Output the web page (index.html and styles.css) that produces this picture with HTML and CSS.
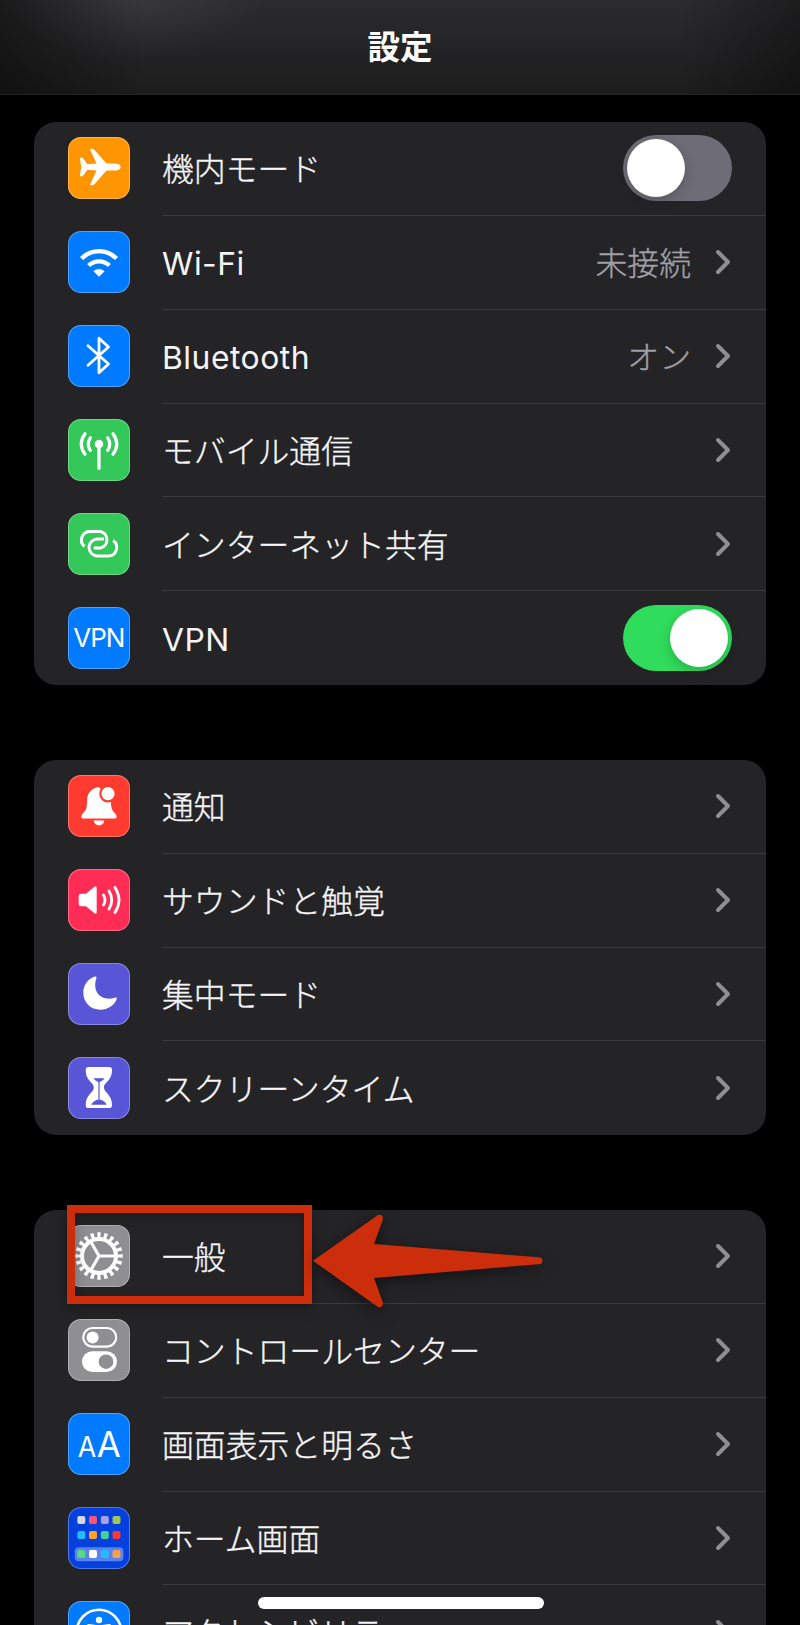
FILE: index.html
```html
<!DOCTYPE html>
<html lang="ja">
<head>
  <meta charset="UTF-8" />
  <meta name="viewport" content="width=device-width, initial-scale=1.0"/>
  <title>設定</title>
  <link rel="stylesheet" href="styles.css">
</head>
<body>
  <header class="navbar"><h1>設定</h1></header>

  <main class="settings">
    <!-- 通信 -->
    <ul class="group">
      <li>
        <svg class="icon orange" viewBox="0 0 62 62"><path fill="#fff" d="M52.700 30C52.700 27.600 49.500 26.500 46.500 26.500H38.500L26.300 12.800C25.300 11.800 23.500 11.500 22 12.200L28.500 26.500L19.500 27.300L15.200 21.500C14.200 20.200 12.500 20.300 11.800 21.200L13.300 30L11.800 38.800C12.500 39.700 14.200 39.800 15.200 38.500L19.500 32.700L28.500 33.500L22 47.800C23.500 48.500 25.300 48.200 26.300 47.200L38.500 33.500H46.500C49.500 33.500 52.700 32.400 52.700 30Z"/></svg>
        <div class="row"><span class="label">機内モード</span><span class="switch"></span></div>
      </li>
      <li>
        <svg class="icon blue" viewBox="0 0 62 62"><g fill="none" stroke="#fff" stroke-width="4.300"><path d="M13.500 27.500A24.500 24.500 0 0 1 48.500 27.500"/><path d="M20.600 34.600A14.700 14.700 0 0 1 41.400 34.600"/></g><path fill="#fff" d="M31 45.800L25.400 40.200Q31 35.600 36.600 40.200Z"/></svg>
        <div class="row"><span class="label latin">Wi-Fi</span><span class="value">未接続</span><svg class="chevron" viewBox="0 0 16 26"><path d="M3 3L13 13L3 23"/></svg></div>
      </li>
      <li>
        <svg class="icon blue" viewBox="0 0 62 62"><path fill="none" stroke="#fff" stroke-width="2.800" stroke-linecap="round" stroke-linejoin="round" d="M20 20.800L40.500 39L31 47.800V13.200L40.500 22L20 40.200"/></svg>
        <div class="row"><span class="label latin">Bluetooth</span><span class="value">オン</span><svg class="chevron" viewBox="0 0 16 26"><path d="M3 3L13 13L3 23"/></svg></div>
      </li>
      <li>
        <svg class="icon green" viewBox="0 0 62 62"><circle cx="31" cy="25" r="4.300" fill="#fff"/><path fill="none" stroke="#fff" stroke-width="3.200" stroke-linecap="round" d="M31 26V49.500M22.300 18.800Q18.200 25 22.300 31.300M39.700 18.800Q43.800 25 39.700 31.300M17 14.800Q9.500 25 17 35.300M45 14.800Q52.500 25 45 35.300"/></svg>
        <div class="row"><span class="label">モバイル通信</span><svg class="chevron" viewBox="0 0 16 26"><path d="M3 3L13 13L3 23"/></svg></div>
      </li>
      <li>
        <svg class="icon green" viewBox="0 0 62 62"><path fill="none" stroke="#fff" stroke-width="3" d="M16.500 33.500A8.500 8.500 0 0 1 21.500 18.500H32.500A8.500 8.500 0 0 1 32.500 35H25.700M36 26H29.500A8.500 8.500 0 0 0 29.500 43H40A8.500 8.500 0 0 0 45 27.500"/></svg>
        <div class="row"><span class="label">インターネット共有</span><svg class="chevron" viewBox="0 0 16 26"><path d="M3 3L13 13L3 23"/></svg></div>
      </li>
      <li>
        <svg class="icon blue" viewBox="0 0 62 62"><text class="vpn" x="31.300" y="39.500" textLength="52">VPN</text></svg>
        <div class="row"><span class="label latin">VPN</span><span class="switch on"></span></div>
      </li>
    </ul>

    <!-- 通知・集中 -->
    <ul class="group">
      <li>
        <svg class="icon red" viewBox="0 0 62 62"><path fill="#fff" d="M31 12C23.500 13 19 18 19 26C19 34 18 35.500 14 39.500C12.500 42 13.500 43.500 15.500 43.500H46.500C48.500 43.500 49.500 42 48 39.500C44 35.500 43 34 43 26L31 12ZM25.700 45.500H36.300C35.500 52 26.500 52 25.700 45.500Z"/><circle cx="40" cy="18.700" r="8.800" fill="#ff3b30"/><circle cx="40" cy="18.700" r="6.600" fill="#fff"/></svg>
        <div class="row"><span class="label">通知</span><svg class="chevron" viewBox="0 0 16 26"><path d="M3 3L13 13L3 23"/></svg></div>
      </li>
      <li>
        <svg class="icon pink" viewBox="0 0 62 62"><path fill="#fff" d="M13 24.700H18L26.500 17.800Q28.700 16.500 28.700 19V43Q28.700 45.500 26.500 44.200L18 37.300H13Q10.700 37.300 10.700 35V27Q10.700 24.700 13 24.700Z"/><path fill="none" stroke="#fff" stroke-width="2.800" stroke-linecap="round" d="M35.500 26Q38.500 31 35.500 36M41 22Q46.500 31 41 40M47 18.500Q55 31 47 43.500"/></svg>
        <div class="row"><span class="label">サウンドと触覚</span><svg class="chevron" viewBox="0 0 16 26"><path d="M3 3L13 13L3 23"/></svg></div>
      </li>
      <li>
        <svg class="icon purple" viewBox="0 0 62 62"><path fill="#fff" d="M27 13.500C19.500 16 15.300 22.500 15.300 29.500C15.300 39.500 22.500 46.700 32.500 46.700C39.500 46.700 46.500 42.500 48.600 36.300C49 34.700 48.200 34.200 46.800 34.700C35.500 38.500 23.500 31 28.300 15.500C28.700 14 28.300 13.200 27 13.500Z"/></svg>
        <div class="row"><span class="label">集中モード</span><svg class="chevron" viewBox="0 0 16 26"><path d="M3 3L13 13L3 23"/></svg></div>
      </li>
      <li>
        <svg class="icon purple" viewBox="0 0 62 62"><path fill="#fff" d="M20.500 10H41.200Q44 10 44 12.800C44 24.500 36 25 36 30.500S44 37 44 48.200Q44 51 41.200 51H20.500Q17.700 51 17.700 48.200C17.700 37 25.800 36 25.800 30.500S17.700 24.500 17.700 12.800Q17.700 10 20.500 10Z"/><path fill="#5856d6" d="M25.500 21.300H36.500Q35.500 23.500 32 24.700V42.500Q37.500 44.500 38.700 47.700H23.200Q24.500 44.500 30 42.500V24.700Q26.500 23.500 25.500 21.300Z"/><path stroke="#fff" stroke-width=".8" d="M31 25V43"/></svg>
        <div class="row"><span class="label">スクリーンタイム</span><svg class="chevron" viewBox="0 0 16 26"><path d="M3 3L13 13L3 23"/></svg></div>
      </li>
    </ul>

    <!-- 一般 -->
    <ul class="group">
      <li>
        <svg class="icon gray" viewBox="0 0 62 62"><g fill="none" stroke="#fff"><circle cx="31" cy="31" r="21" stroke-width="5.500" pathLength="80" stroke-dasharray="2 2" stroke-dashoffset="1"/><circle cx="31" cy="31" r="17" stroke-width="4"/><path stroke-width="3.200" d="M48 31H31L22.500 16.300M31 31L22.500 45.700"/></g></svg>
        <div class="row"><span class="label">一般</span><svg class="chevron" viewBox="0 0 16 26"><path d="M3 3L13 13L3 23"/></svg></div>
        <span class="marker"></span>
        <svg class="arrow" viewBox="0 0 232 96"><path d="M1 47.800L66 2Q71 1 71 6L62 31L229 44.500Q232 48 229 51L62 65L71 90Q71 95 66 94Z"/></svg>
      </li>
      <li>
        <svg class="icon gray" viewBox="0 0 62 62"><rect x="15.200" y="9" width="33" height="18.600" rx="9.300" fill="none" stroke="#fff" stroke-width="2.200"/><circle cx="24.600" cy="18.500" r="6" fill="#fff"/><rect x="14" y="32.300" width="35" height="20.800" rx="10.400" fill="#fff"/><circle cx="38" cy="42.700" r="7.300" fill="#8e8e93"/></svg>
        <div class="row"><span class="label">コントロールセンター</span><svg class="chevron" viewBox="0 0 16 26"><path d="M3 3L13 13L3 23"/></svg></div>
      </li>
      <li>
        <svg class="icon blue" viewBox="0 0 62 62"><text class="aa" x="9.800" y="44.300" font-size="28" textLength="18.500" lengthAdjust="spacingAndGlyphs">A</text><text class="aa" x="28.800" y="44.300" font-size="36" textLength="24" lengthAdjust="spacingAndGlyphs">A</text></svg>
        <div class="row"><span class="label">画面表示と明るさ</span><svg class="chevron" viewBox="0 0 16 26"><path d="M3 3L13 13L3 23"/></svg></div>
      </li>
      <li>
        <svg class="icon navy" viewBox="0 0 62 62">
          <rect x="6.800" y="40.300" width="48.600" height="14" rx="4" fill="#5b83ee"/>
          <rect x="9.300" y="9" width="8" height="8" rx="2" fill="#d8d8dc"/>
          <rect x="21" y="9" width="8" height="8" rx="2" fill="#fc5474"/>
          <rect x="32.800" y="9" width="8" height="8" rx="2" fill="#ab9fe6"/>
          <rect x="44.500" y="9" width="8" height="8" rx="2" fill="#a1c653"/>
          <rect x="9.300" y="24" width="8" height="8" rx="2" fill="#20bdff"/>
          <rect x="21" y="24" width="8" height="8" rx="2" fill="#ffa220"/>
          <rect x="32.800" y="24" width="8" height="8" rx="2" fill="#43d39a"/>
          <rect x="44.500" y="24" width="8" height="8" rx="2" fill="#fa3838"/>
          <rect x="9.300" y="43" width="8" height="8" rx="2" fill="#55d982"/>
          <rect x="21" y="43" width="8" height="8" rx="2" fill="#fff"/>
          <rect x="32.800" y="43" width="8" height="8" rx="2" fill="#20bdff"/>
          <rect x="44.500" y="43" width="8" height="8" rx="2" fill="#f9a04b"/>
        </svg>
        <div class="row"><span class="label">ホーム画面</span><svg class="chevron" viewBox="0 0 16 26"><path d="M3 3L13 13L3 23"/></svg></div>
      </li>
      <li>
        <svg class="icon blue" viewBox="0 0 62 62"><circle cx="31" cy="31" r="22.300" fill="none" stroke="#fff" stroke-width="2.600"/><circle cx="31" cy="19" r="3.200" fill="#fff"/><path fill="none" stroke="#fff" stroke-width="3" stroke-linecap="round" stroke-linejoin="round" d="M20.500 24.500L28 25.500H34L41.500 24.500M28.500 26V34L25 44M33.500 26V34L37 44"/></svg>
        <div class="row"><span class="label">アクセシビリティ</span><svg class="chevron" viewBox="0 0 16 26"><path d="M3 3L13 13L3 23"/></svg></div>
      </li>
    </ul>
  </main>

  <div class="home-indicator"></div>
</body>
</html>
```
FILE: styles.css
```css
* {
  box-sizing: border-box;
}
body {
  margin: 0;
  height: 1625px;
  overflow: hidden;
  position: relative;
  background-color: #000;
  color: #f5f5f7;
  font-family: Inter, "Noto Sans CJK JP", sans-serif;
}
.navbar {
  height: 95px;
  display: flex;
  align-items: center;
  justify-content: center;
  padding-bottom: 5px;
  border-bottom: 1px solid #222224;
  background:
    radial-gradient(ellipse 130px 60px at 135px 0, rgba(255,255,255,0.06), transparent),
    linear-gradient(90deg, rgba(0,0,0,0.4), transparent 18%, transparent 85%, rgba(0,0,0,0.35)),
    linear-gradient(#2c2c2e, #1c1c1d);
}
h1 {
  margin: 0;
  font-size: 32.500px;
  font-weight: 700;
  color: #fff;
}
.settings {
  display: flex;
  flex-direction: column;
  gap: 74.800px;
  padding: 27px 34px 0;
}
.group {
  list-style: none;
  margin: 0;
  padding: 0;
  border-radius: 22px;
  background-color: #242427;
}
.group li {
  position: relative;
  display: flex;
  align-items: center;
  height: 93.850px;
  padding-left: 34px;
}
.icon {
  flex: none;
  width: 62px;
  height: 62px;
  margin-bottom: 1px;
  border-radius: 13px;
  box-shadow: inset 0 0 0 1px rgba(255,255,255,0.3);
}
.orange { background-color: #ff9500; }
.blue { background-color: #007aff; }
.green { background-color: #34c759; }
.red { background-color: #ff3b30; }
.pink { background-color: #ff2d55; }
.purple { background-color: #5856d6; }
.gray { background-color: #8e8e93; }
.navy { background-color: #0440de; }
.vpn {
  fill: #fff;
  font-size: 26px;
  text-anchor: middle;
}
.aa {
  fill: #fff;
  font-weight: 400;
}
.row {
  flex: 1;
  display: flex;
  align-items: center;
  height: 100%;
  margin-left: 32px;
  padding-right: 35px;
  border-bottom: 1px solid #3b3b3e;
}
.group li:last-child .row {
  border-bottom: none;
}
.label,
.value {
  font-size: 31.850px;
  font-weight: 300;
  line-height: 40px;
  padding-top: 4px;
  white-space: nowrap;
  -webkit-text-stroke: 0.350px currentColor;
}
.label {
  flex: 1;
}
.latin {
  font-weight: 380;
  letter-spacing: 0.500px;
  -webkit-text-stroke: 0;
}
.value {
  margin-right: 24px;
  color: #a0a0a6;
}
.chevron {
  width: 16px;
  height: 26px;
}
.chevron path {
  fill: none;
  stroke: #8e8e93;
  stroke-width: 4;
  stroke-linecap: round;
  stroke-linejoin: round;
}
.switch {
  width: 109px;
  height: 66px;
  margin-right: -1px;
  padding: 4px;
  border-radius: 33px;
  background-color: #6e6d77;
}
.switch::before {
  content: "";
  display: block;
  width: 58px;
  height: 58px;
  border-radius: 50%;
  background-color: #fff;
  box-shadow: 0 4px 12px rgba(0,0,0,0.2);
}
.switch.on {
  background-color: #30dc5b;
}
.switch.on::before {
  margin-left: auto;
}
.marker {
  position: absolute;
  left: 33px;
  top: -5px;
  width: 245px;
  height: 99px;
  border: 8px solid #cc2e0b;
  box-shadow: 0 3px 12px rgba(0,0,0,0.35), inset 0 3px 12px rgba(0,0,0,0.25);
}
.arrow {
  position: absolute;
  left: 277.500px;
  top: 3px;
  width: 232px;
  height: 96px;
  filter: drop-shadow(0 4px 8px rgba(0,0,0,0.5));
}
.arrow path {
  fill: #cc2e0b;
}
.home-indicator {
  position: absolute;
  left: 257.500px;
  top: 1597px;
  width: 286px;
  height: 11.500px;
  border-radius: 6px;
  background-color: #fff;
}
```
